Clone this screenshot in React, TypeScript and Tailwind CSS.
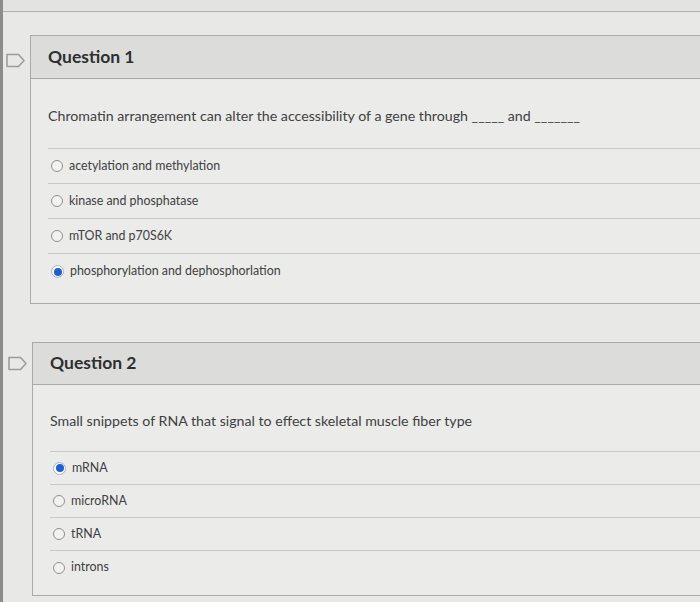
import React from "react";

type Opt = { label: string; selected?: boolean };

const Flag = () => (
  <svg width="21" height="15" viewBox="0 0 21 15" fill="none">
    <path
      d="M2 1.5 H13.5 L19 7.5 L13.5 13.5 H2 Z"
      stroke="#9a9c9d"
      strokeWidth="1.6"
      strokeLinejoin="round"
    />
  </svg>
);

const Radio = ({ on }: { on?: boolean }) =>
  on ? (
    <span className="flex h-[13px] w-[13px] items-center justify-center rounded-full border border-[#9fb3d6] bg-white">
      <span className="h-[8px] w-[8px] rounded-full bg-[#1d5fcf]" />
    </span>
  ) : (
    <span className="h-[12px] w-[12px] rounded-full border border-[#8e9091] bg-[#f2f2f1]" />
  );

interface QProps {
  title: string;
  prompt: React.ReactNode;
  options: Opt[];
  headerH: string;
  bodyTop: string;
  gap: string;
  rowH: string;
  bottom: string;
  flagTop: string;
}

const Question: React.FC<QProps> = ({ title, prompt, options, headerH, bodyTop, gap, rowH, bottom, flagTop }) => (
  <div className="flex">
    <div className={`w-[27px] shrink-0 ${flagTop} pl-[2px]`}>
      <Flag />
    </div>
    <div className="flex-1 border-y border-l border-[#a9aaa9]">
      <div className={`${headerH} flex items-center border-b border-[#a9aaa9] bg-[#dcdddb] pl-[17px]`}>
        <h2 className="text-[17.5px] font-bold text-[#2e2f30]">{title}</h2>
      </div>
      <div className={`bg-[#ebebe9] pl-[17px] ${bodyTop} ${bottom}`}>
        <p className="text-[14.2px] leading-[20px] text-[#404142]">{prompt}</p>
        <div className={`${gap} border-t border-[#c9cac8]`}>
          {options.map((o, i) => (
            <div
              key={o.label}
              className={`${rowH} flex items-center gap-[6px] pl-[3px] ${i < options.length - 1 ? "border-b border-[#c9cac8]" : ""}`}
            >
              <Radio on={o.selected} />
              <span className="text-[12.4px] text-[#404142]">{o.label}</span>
            </div>
          ))}
        </div>
      </div>
    </div>
  </div>
);

export default function App() {
  return (
    <div
      className="h-[602px] w-[700px] overflow-hidden border-l-[3px] border-[#8b8c8b] bg-[#e8e9e7]"
      style={{ fontFamily: "Lato, 'Open Sans', sans-serif" }}
    >
      <div className="h-[12px] border-b border-[#aeafad] bg-[#e3e4e2]" />
      <div className="pt-[23px]">
        <Question
          title="Question 1"
          headerH="h-[43px]"
          flagTop="pt-[18px]"
          bodyTop="pt-[27px]"
          gap="mt-[22px]"
          rowH="h-[35px]"
          bottom="pb-[14px]"
          prompt={
            <>
              Chromatin arrangement can alter the accessibility of a gene through _____ and _______
            </>
          }
          options={[
            { label: "acetylation and methylation" },
            { label: "kinase and phosphatase" },
            { label: "mTOR and p70S6K" },
            { label: "phosphorylation and dephosphorlation", selected: true },
          ]}
        />
      </div>
      <div className="pt-[38px] pl-[2px]">
        <Question
          title="Question 2"
          headerH="h-[42px]"
          flagTop="pt-[14px]"
          bodyTop="pt-[26px]"
          gap="mt-[20px]"
          rowH="h-[33px]"
          bottom="pb-[11px]"
          prompt="Small snippets of RNA that signal to effect skeletal muscle fiber type"
          options={[
            { label: "mRNA", selected: true },
            { label: "microRNA" },
            { label: "tRNA" },
            { label: "introns" },
          ]}
        />
      </div>
    </div>
  );
}
